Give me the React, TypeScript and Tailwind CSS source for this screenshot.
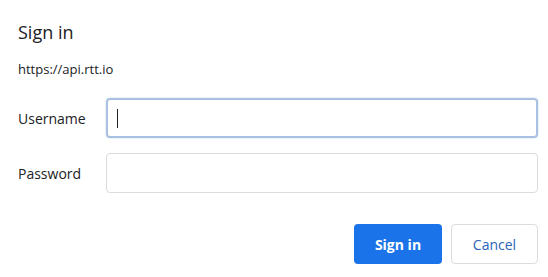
import React from 'react';

const App: React.FC = () => {
  return (
    <div className="w-[548px] h-[277px] bg-white text-[#202124] font-['Open_Sans','Noto_Sans',sans-serif] pl-[18px] pr-[10px] pt-[20px]">
      <h1 className="text-[18px] leading-[24px]">Sign in</h1>
      <p className="mt-[16px] text-[13px] leading-[18px]">https://api.rtt.io</p>

      <div className="mt-[20px] flex flex-col gap-[15px]">
        <div className="flex items-center">
          <label className="w-[88px] text-[14px]">Username</label>
          <div className="flex-1 h-[40px] rounded-[4px] border-2 border-[#a9c1e0] shadow-[0_0_2px_rgba(100,140,200,0.4)] flex items-center px-[9px]">
            <span className="w-px h-[19px] bg-[#202124]" />
          </div>
        </div>
        <div className="flex items-center">
          <label className="w-[88px] text-[14px]">Password</label>
          <div className="flex-1 h-[40px] rounded-[4px] border border-[#dadce0]" />
        </div>
      </div>

      <div className="mt-[31px] flex justify-end gap-[9px]">
        <button className="w-[88px] h-[40px] rounded-[4px] bg-[#1a73e8] text-white text-[14px] font-bold">
          Sign in
        </button>
        <button className="w-[87px] h-[40px] rounded-[4px] border border-[#dadce0] text-[#2a64b8] text-[14px]">
          Cancel
        </button>
      </div>
    </div>
  );
};

export default App;
